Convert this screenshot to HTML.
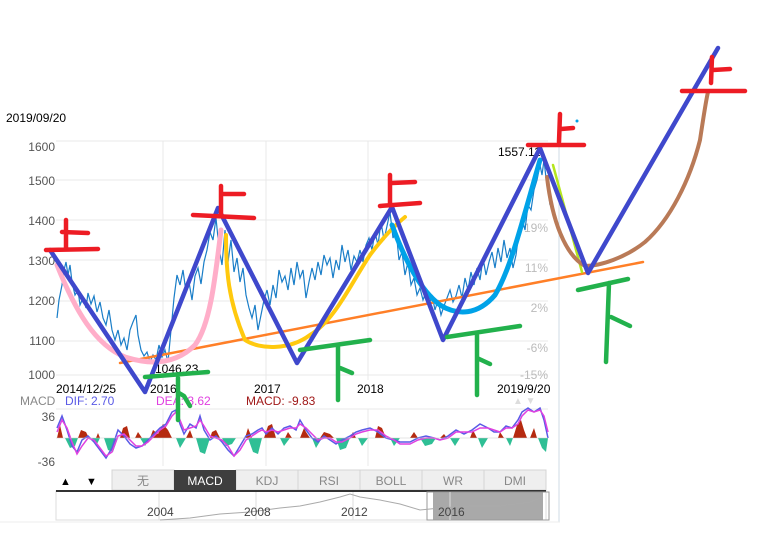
<!DOCTYPE html>
<html><head><meta charset="utf-8"><style>
body{margin:0;background:#fff;width:766px;height:542px;overflow:hidden;font-family:"Liberation Sans","Noto Sans CJK SC",sans-serif}
svg{position:absolute;left:0;top:0}
</style></head><body>
<svg width="766" height="542" viewBox="0 0 766 542" font-family="Liberation Sans, Noto Sans CJK SC, sans-serif">
<text x="6" y="122" font-size="12" fill="#000">2019/09/20</text>
<g stroke="#e8e8e8" stroke-width="1">
<line x1="56" y1="141" x2="548" y2="141"/><line x1="56" y1="180" x2="548" y2="180"/><line x1="56" y1="220" x2="548" y2="220"/><line x1="56" y1="260" x2="548" y2="260"/><line x1="56" y1="301" x2="548" y2="301"/><line x1="56" y1="341" x2="548" y2="341"/><line x1="56" y1="375" x2="548" y2="375"/>
<line x1="163" y1="141" x2="163" y2="380"/><line x1="266" y1="141" x2="266" y2="380"/><line x1="368" y1="141" x2="368" y2="380"/>
<line x1="56" y1="409" x2="548" y2="409"/><line x1="163" y1="409" x2="163" y2="466"/><line x1="266" y1="409" x2="266" y2="466"/><line x1="368" y1="409" x2="368" y2="466"/>
</g>
<line x1="559" y1="140" x2="559" y2="522" stroke="#cfdbe6"/>
<g font-size="12" fill="#555" text-anchor="end">
<text x="55" y="151">1600</text><text x="55" y="185">1500</text><text x="55" y="225">1400</text><text x="55" y="265">1300</text><text x="55" y="305">1200</text><text x="55" y="345">1100</text><text x="55" y="379">1000</text>
</g>
<g font-size="12" fill="#bbb" text-anchor="end">
<text x="548" y="232">19%</text><text x="548" y="272">11%</text><text x="548" y="312">2%</text><text x="548" y="352">-6%</text><text x="548" y="379">-15%</text>
</g>
<g font-size="12" fill="#000">
<text x="56" y="393">2014/12/25</text><text x="150" y="393">2016</text><text x="254" y="393">2017</text><text x="357" y="393">2018</text><text x="497" y="393">2019/9/20</text>
<text x="155" y="373">1046.23</text><text x="498" y="156">1557.11</text>
</g>
<polyline fill="none" stroke="#1a7ec8" stroke-width="1.2" points="57,318 59,300 62,285 64,270 66,262 68,275 70,265 72,282 75,295 78,290 80,305 83,298 86,308 88,293 91,304 94,296 97,312 100,302 103,318 106,325 109,310 112,330 115,340 118,330 121,345 124,338 127,350 130,330 133,322 136,315 138,335 141,350 144,356 147,352 150,362 153,355 156,360 159,345 162,357 165,350 168,362 171,330 174,298 177,275 180,285 183,270 186,292 189,282 192,300 195,276 198,268 201,284 204,262 207,250 210,232 213,240 216,218 219,248 222,265 225,230 228,262 231,240 234,272 237,258 240,282 243,268 246,295 249,308 252,318 255,305 258,330 261,315 264,300 267,290 270,305 273,285 276,298 279,270 282,282 285,276 288,290 291,268 294,285 297,262 300,278 303,270 306,298 309,282 312,268 315,280 318,262 321,275 324,255 327,265 330,258 333,278 336,260 339,270 342,245 345,262 348,250 351,270 354,256 357,262 360,250 363,262 366,245 369,238 372,250 375,232 378,245 381,222 384,240 387,226 390,212 393,238 396,230 399,260 402,252 405,275 408,262 411,285 414,278 417,295 420,288 423,300 426,292 429,305 432,295 435,310 438,300 441,315 444,306 447,298 450,290 453,302 456,296 459,285 462,298 465,278 468,290 471,272 474,285 477,268 480,280 483,258 486,275 489,262 492,252 495,268 498,248 501,262 504,240 507,258 510,248 513,268 516,255 519,232 522,218 525,230 528,205 531,210 534,190 537,180 540,165 542,175 544,160 546,178 548,188 550,205"/>
<g font-size="12"><text x="20" y="405" fill="#888">MACD</text><text x="65" y="405" fill="#5a5ae6">DIF: 2.70</text><text x="156" y="405" fill="#e040e0">DEA: 3.62</text><text x="246" y="405" fill="#a01818">MACD: -9.83</text></g>
<text x="55" y="421" font-size="12" fill="#555" text-anchor="end">36</text>
<text x="55" y="466" font-size="12" fill="#555" text-anchor="end">-36</text>
<path fill="#b52a10" d="M57,438 L60,425 L63,438Z M78,438 L81,430 L86,432 L89,438Z M96,438 L98,433 L100,438Z M120,438 L123,428 L127,426 L130,438Z M135,438 L138,432 L142,438Z M150,438 L153,430 L158,434 L163,424 L168,430 L172,438Z M186,438 L190,430 L193,438Z M210,438 L212,432 L216,430 L220,438Z M245,438 L248,428 L252,438Z M264,438 L268,426 L272,424 L276,438Z M285,438 L288,432 L292,438Z M300,438 L304,428 L306,432 L310,438Z M320,438 L324,432 L330,434 L334,438Z M350,438 L353,432 L356,438Z M375,438 L378,426 L382,428 L386,438Z M410,438 L414,432 L418,438Z M440,438 L444,434 L447,438Z M470,438 L473,430 L477,438Z M498,438 L500,432 L504,438Z M513,438 L517,425 L521,420 L524,430 L527,438Z M530,438 L534,428 L537,438Z"/>
<path fill="#2fbf95" d="M65,438 L70,448 L75,446 L78,438Z M92,438 L96,446 L100,438Z M104,438 L108,450 L113,452 L118,438Z M140,438 L145,446 L150,438Z M176,438 L180,448 L186,438Z M196,438 L200,452 L205,454 L210,438Z M222,438 L226,446 L232,444 L236,438Z M248,438 L253,452 L258,454 L262,438Z M280,438 L284,446 L290,438Z M312,438 L316,448 L322,438Z M336,438 L340,450 L346,448 L350,438Z M358,438 L362,446 L368,438Z M390,438 L394,446 L400,438Z M420,438 L425,446 L432,444 L436,438Z M450,438 L455,446 L460,438Z M478,438 L482,448 L488,438Z M506,438 L510,446 L513,438Z M538,438 L542,448 L546,452 L548,438Z"/>
<polyline fill="none" stroke="#5a5ae6" stroke-width="1.5" points="57,428 62,416 67,430 72,446 77,452 82,440 88,436 94,442 100,450 106,458 112,448 118,430 124,436 130,444 136,448 142,446 148,440 154,434 160,428 166,424 172,412 176,410 180,424 184,434 190,424 196,428 200,416 204,430 210,440 216,436 222,442 228,450 234,456 240,446 246,436 252,434 258,430 262,428 266,434 272,428 278,434 284,428 290,426 296,430 300,420 306,430 312,438 318,442 324,436 330,440 336,444 342,440 350,436 356,432 362,430 370,428 378,432 386,438 394,440 400,442 410,442 418,438 426,436 434,438 440,440 448,436 456,430 464,434 472,430 480,424 488,428 494,432 500,432 506,426 512,428 518,420 522,412 528,408 534,412 540,408 544,420 548,438"/>
<polyline fill="none" stroke="#e040e0" stroke-width="1.5" points="57,432 62,420 67,428 72,442 77,454 82,446 88,438 94,440 100,448 106,456 112,452 118,436 124,434 130,440 136,446 142,446 148,442 154,436 160,430 166,426 172,416 176,412 180,420 184,430 190,428 196,426 200,420 204,426 210,436 216,438 222,440 228,446 234,456 240,450 246,440 252,436 258,432 262,430 266,432 272,430 278,432 284,430 290,428 296,428 300,424 306,428 312,434 318,440 324,438 330,438 336,442 342,442 350,438 356,434 362,432 370,430 378,430 386,436 394,440 400,444 410,444 418,440 426,438 434,438 440,440 448,438 456,432 464,432 472,432 480,428 488,428 494,430 500,432 506,428 512,428 518,424 522,416 528,410 534,412 540,410 544,416 548,432"/>
<line x1="56" y1="438" x2="548" y2="438" stroke="#ccc" stroke-width="0.5"/>
<text x="513" y="404" font-size="10" fill="#ddd">▲ ▼</text>
<rect x="56" y="469" width="20" height="21" fill="#fff"/>
<text x="60" y="485" font-size="11" fill="#000">▲</text><text x="86" y="485" font-size="11" fill="#000">▼</text>
<g stroke="#d4d4d4" fill="#efefef">
<rect x="112" y="470" width="62" height="20"/><rect x="236" y="470" width="62" height="20"/><rect x="298" y="470" width="62" height="20"/><rect x="360" y="470" width="62" height="20"/><rect x="422" y="470" width="62" height="20"/><rect x="484" y="470" width="62" height="20"/>
</g>
<rect x="174" y="470" width="62" height="20" fill="#3e3e3e"/>
<g font-size="12" fill="#888" text-anchor="middle">
<text x="143" y="485">无</text><text x="205" y="485" fill="#fff">MACD</text><text x="267" y="485">KDJ</text><text x="329" y="485">RSI</text><text x="391" y="485">BOLL</text><text x="453" y="485">WR</text><text x="515" y="485">DMI</text>
</g>
<rect x="56" y="491" width="490" height="29" fill="#fff" stroke="#ddd"/>
<line x1="56" y1="491" x2="546" y2="491" stroke="#333" stroke-width="2"/>
<rect x="433" y="492" width="110" height="28" fill="#a9a9a9"/>
<rect x="427" y="492" width="122" height="28" fill="none" stroke="#999"/>
<g stroke="#ddd"><line x1="159" y1="492" x2="159" y2="520"/><line x1="256" y1="492" x2="256" y2="520"/><line x1="353" y1="492" x2="353" y2="520"/><line x1="450" y1="492" x2="450" y2="520"/></g>
<polyline fill="none" stroke="#aaa" stroke-width="1" points="160,520 190,518 220,514 250,512 280,508 300,506 320,502 340,497 350,494 360,497 380,500 400,504 420,510 440,508 470,506 500,506 530,502 543,497"/>
<g font-size="12" fill="#444"><text x="147" y="516">2004</text><text x="244" y="516">2008</text><text x="341" y="516">2012</text><text x="438" y="516">2016</text></g>
<line x1="0" y1="522" x2="560" y2="522" stroke="#eee"/>
<g fill="none" stroke-linecap="round" stroke-linejoin="round">
<line x1="120" y1="363" x2="643" y2="262" stroke="#ff7f27" stroke-width="2.5"/>
<path d="M57,265 C75,310 95,345 125,357 C150,365 175,365 195,345 C210,325 215,280 221,230" stroke="#ffaec9" stroke-width="5"/>
<path d="M226,235 C226,270 228,300 245,340 C260,350 290,350 310,335 C335,320 350,285 370,255 C385,235 395,225 405,217" stroke="#ffc90e" stroke-width="4"/>
<path d="M392,225 C405,260 420,290 440,305 C458,316 478,315 495,295 C510,270 520,230 540,160" stroke="#00a2e8" stroke-width="5"/>
<line x1="553" y1="165" x2="582" y2="272" stroke="#b5e61d" stroke-width="2.5"/>
<path d="M547,177 C552,220 565,255 585,266 C600,266 625,258 645,242 C670,220 690,180 700,140 C703,120 706,100 708,92" stroke="#b97a57" stroke-width="4"/>
<polyline points="50,250 145,392 218,208 297,363 392,207 443,340 540,148 588,273 718,48" stroke="#3f48cc" stroke-width="4.5"/>
<g stroke="#ed1c24" stroke-width="4.5">
<path d="M46,250 L98,249 M66,220 L66,248 M62,232 L88,233"/>
<path d="M193,215 L254,218 M221,186 L221,215 M223,194 L244,194"/>
<path d="M380,206 L420,203 M390,175 L390,205 M392,183 L415,182"/>
<path d="M528,145 L584,145 M560,114 L559,142 M561,129 L573,128"/>
<path d="M682,91 L745,91 M712,57 L711,83 M713,70 L730,69"/>
</g>
<g stroke="#22b14c" stroke-width="4.5">
<path d="M145,377 L208,372 M178,378 L178,420 M179,393 L184,396 L190,406"/>
<path d="M300,350 L370,340 M338,345 L338,400 M340,368 L352,373"/>
<path d="M447,337 L520,326 M477,335 L477,395 M477,358 L490,364"/>
<path d="M578,290 L628,279 M609,283 L606,362 M611,317 L630,326"/>
</g>
</g>
<circle cx="577" cy="121" r="1.5" fill="#00a2e8"/>
</svg>
</body></html>
